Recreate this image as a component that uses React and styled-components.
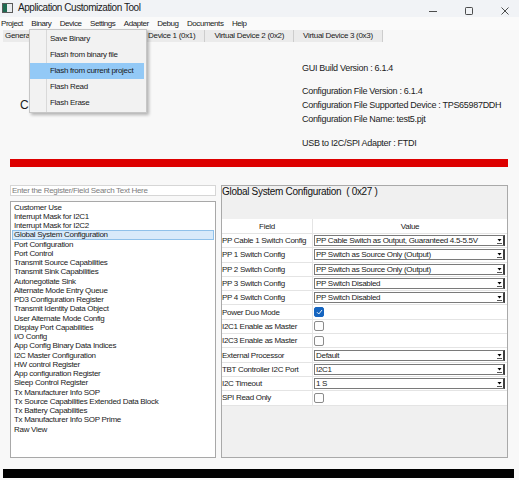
import styled, { createGlobalStyle } from "styled-components";

const GlobalStyle = createGlobalStyle`
  html, body {
    margin: 0;
    padding: 0;
    background: #f8f8f8;
  }
  body {
    font-family: "Liberation Sans", Arial, sans-serif;
  }
`;

const Window = styled.div`
  position: relative;
  width: 519px;
  height: 480px;
  overflow: hidden;
  display: flex;
  flex-direction: column;
  background: #f8f8f8;
  color: #1b1b1b;
  font-family: "Liberation Sans", Arial, sans-serif;
  font-size: 8px;
  letter-spacing: -0.3px;
`;

const TitleBar = styled.div`
  height: 17px;
  display: flex;
  align-items: flex-start;
  background: #f1f3f6;
`;

const AppIcon = styled.svg`
  margin: 3px 0 0 2px;
  flex: none;
`;

const Title = styled.span`
  margin: 2px 0 0 5px;
  font-size: 10px;
  line-height: 11px;
  letter-spacing: -0.45px;
  color: #1a1a1a;
`;

const Controls = styled.div`
  margin-left: auto;
  display: flex;
  gap: 28px;
  padding: 7px 10px 0 0;
`;

const MenuBar = styled.div`
  height: 13px;
  display: flex;
  gap: 8.5px;
  padding-left: 1px;
  background: #fafafa;
`;

const MenuItem = styled.span`
  line-height: 13px;
  letter-spacing: -0.45px;
  color: #1a1a1a;
`;

const TabStrip = styled.div`
  height: 12px;
  display: flex;
  padding-left: 3px;
`;

const Tab = styled.div`
  width: ${(p) => (p.$width ? `${p.$width}px` : "auto")};
  box-sizing: border-box;
  padding: 0 ${(p) => (p.$first ? "2px" : "9px")};
  line-height: 12px;
  white-space: nowrap;
  overflow: hidden;
  background: #ebebeb;
  border-right: 1px solid #cdcdcd;
  color: #1a1a1a;
`;

const Header = styled.div`
  height: 117px;
  display: flex;
`;

const DeviceLabel = styled.div`
  width: 282px;
  padding: 56px 0 0 20px;
  font-size: 12px;
  letter-spacing: 0;
  line-height: 14px;
`;

const Info = styled.div`
  padding-top: 19px;
  font-size: 9px;
  line-height: 14px;
  letter-spacing: -0.3px;
`;

const InfoGroup = styled.div`
  margin-top: ${(p) => p.$gap || 0}px;
`;

const RedBar = styled.div`
  height: 8px;
  margin: 0 11px 0 10px;
  background: #dd0000;
`;

const Workspace = styled.div`
  margin-top: 18px;
  height: 273px;
  display: flex;
  gap: 5px;
  padding: 0 11px 0 10px;
`;

const LeftColumn = styled.div`
  width: 206px;
  display: flex;
  flex-direction: column;
  gap: 5px;
`;

const Search = styled.input`
  height: 11px;
  box-sizing: border-box;
  margin: 0;
  padding: 0 1px;
  border: 1px solid #d6d6d6;
  background: #fff;
  font-family: inherit;
  font-size: 8px;
  letter-spacing: -0.3px;
  outline: none;
  &::placeholder {
    color: #7d7d7d;
  }
`;

const RegisterList = styled.div`
  flex: 1;
  box-sizing: border-box;
  border: 1px solid #a8a8a8;
  background: #fff;
  padding-top: 0.5px;
`;

const RegisterItem = styled.div`
  margin: 0 1px;
  padding-left: 1px;
  line-height: 7.25px;
  border: 1px solid ${(p) => (p.$selected ? "#8fc1ea" : "transparent")};
  background: ${(p) => (p.$selected ? "#d8eafa" : "transparent")};
  white-space: nowrap;
`;

const Panel = styled.div`
  width: 287px;
  box-sizing: border-box;
  border: 1px solid #a9a9a9;
  background: #f0f0f0;
  display: flex;
  flex-direction: column;
`;

const PanelTitle = styled.div`
  height: 33px;
  font-size: 10px;
  line-height: 12px;
  letter-spacing: -0.3px;
  color: #111;
`;

const Grid = styled.div`
  display: grid;
  grid-template-columns: 91px 1fr;
  grid-template-rows: 15px repeat(12, 14.3px);
  background: #fff;
`;

const Cell = styled.div`
  box-sizing: border-box;
  display: flex;
  align-items: center;
  justify-content: ${(p) => (p.$center ? "center" : "flex-start")};
  border-bottom: 1px solid #e4e4e4;
  border-right: ${(p) => (p.$field ? "1px solid #e4e4e4" : "none")};
  white-space: nowrap;
  overflow: hidden;
`;

const Combo = styled.div`
  flex: 1;
  height: 11px;
  box-sizing: border-box;
  margin: 0 2px 0 1px;
  padding-left: 1px;
  display: flex;
  align-items: center;
  background: #fff;
  border: 1px solid #7a7a7a;
  border-right: 2px solid #3f3f3f;
`;

const ComboText = styled.span`
  flex: 1;
  white-space: nowrap;
  overflow: hidden;
`;

const ComboArrow = styled.svg`
  flex: none;
  margin-right: 1px;
`;

const CheckBox = styled.div`
  width: 10px;
  height: 10px;
  box-sizing: border-box;
  margin-left: 1px;
  border-radius: 2px;
  border: 1px solid ${(p) => (p.$checked ? "#1565c0" : "#8b8b8b")};
  background: ${(p) => (p.$checked ? "#1565c0" : "#fdfdfd")};
  display: flex;
  align-items: center;
  justify-content: center;
`;

const BlackBar = styled.div`
  height: 9px;
  margin: 11px 5px 0 3px;
  background: #000;
`;

const Dropdown = styled.div`
  position: absolute;
  left: 29px;
  top: 29px;
  width: 118px;
  height: 84px;
  box-sizing: border-box;
  padding: 1px 2px 1px 0;
  border: 1px solid #c6c6c6;
  background: #f2f2f2
    linear-gradient(
      to right,
      transparent 16px,
      #d9d9d9 16px,
      #d9d9d9 17px,
      transparent 17px
    );
  box-shadow: 2px 2px 3px rgba(0, 0, 0, 0.28);
`;

const DropdownItem = styled.div`
  height: 16px;
  line-height: 16px;
  padding-left: 20px;
  background: ${(p) => (p.$active ? "#93c9f6" : "transparent")};
  color: #1a1a1a;
`;

const menus = ["Project", "Binary", "Device", "Settings", "Adapter", "Debug", "Documents", "Help"];

const binaryMenu = [
  "Save Binary",
  "Flash from binary file",
  "Flash from current project",
  "Flash Read",
  "Flash Erase",
];

const registers = [
  "Customer Use",
  "Interrupt Mask for I2C1",
  "Interrupt Mask for I2C2",
  "Global System Configuration",
  "Port Configuration",
  "Port Control",
  "Transmit Source Capabilities",
  "Transmit Sink Capabilities",
  "Autonegotiate Sink",
  "Alternate Mode Entry Queue",
  "PD3 Configuration Register",
  "Transmit Identity Data Object",
  "User Alternate Mode Config",
  "Display Port Capabilities",
  "I/O Config",
  "App Config Binary Data Indices",
  "I2C Master Configuration",
  "HW control Register",
  "App configuration Register",
  "Sleep Control Register",
  "Tx Manufacturer Info SOP",
  "Tx Source Capabilities Extended Data Block",
  "Tx Battery Capabilities",
  "Tx Manufacturer Info SOP Prime",
  "Raw View",
];

const fields = [
  { name: "PP Cable 1 Switch Config", combo: "PP Cable Switch as Output, Guaranteed 4.5-5.5V" },
  { name: "PP 1 Switch Config", combo: "PP Switch as Source Only (Output)" },
  { name: "PP 2 Switch Config", combo: "PP Switch as Source Only (Output)" },
  { name: "PP 3 Switch Config", combo: "PP Switch Disabled" },
  { name: "PP 4 Switch Config", combo: "PP Switch Disabled" },
  { name: "Power Duo Mode", check: true },
  { name: "I2C1 Enable as Master", check: false },
  { name: "I2C3 Enable as Master", check: false },
  { name: "External Processor", combo: "Default" },
  { name: "TBT Controller I2C Port", combo: "I2C1" },
  { name: "I2C Timeout", combo: "1 S" },
  { name: "SPI Read Only", check: false },
];

const ValueCell = ({ field }) => {
  if (field.combo) {
    return (
      <Combo>
        <ComboText>{field.combo}</ComboText>
        <ComboArrow width="5" height="7" viewBox="0 0 5 7">
          <polygon points="0.5,2 4.5,2 2.5,4.5" fill="#000" />
          <line x1="0" y1="6.5" x2="5" y2="6.5" stroke="#555" strokeWidth="1" />
        </ComboArrow>
      </Combo>
    );
  }
  return (
    <CheckBox $checked={field.check}>
      {field.check && (
        <svg width="7" height="6" viewBox="0 0 7 6">
          <path d="M1 3.2 L2.8 5 L6 1" fill="none" stroke="#fff" strokeWidth="0.9" />
        </svg>
      )}
    </CheckBox>
  );
};

const App = () => {
  return (
    <Window>
      <GlobalStyle />
      <TitleBar>
        <AppIcon width="11" height="10" viewBox="0 0 11 10">
          <rect x="0.5" y="0.5" width="10" height="9" fill="#e9ecef" stroke="#5a5a5a" />
          <rect x="1" y="1" width="4" height="8" fill="#1f6b52" />
        </AppIcon>
        <Title>Application Customization Tool</Title>
        <Controls>
          <svg width="8" height="8" viewBox="0 0 8 8">
            <line x1="0" y1="4.5" x2="8" y2="4.5" stroke="#222" strokeWidth="0.8" />
          </svg>
          <svg width="8" height="8" viewBox="0 0 8 8">
            <rect x="0.5" y="0.5" width="7" height="7" rx="0.8" fill="none" stroke="#222" strokeWidth="0.8" />
          </svg>
          <svg width="8" height="8" viewBox="0 0 8 8">
            <path d="M0.5 0.5 L7.5 7.5 M7.5 0.5 L0.5 7.5" stroke="#222" strokeWidth="0.8" />
          </svg>
        </Controls>
      </TitleBar>

      <MenuBar>
        {menus.map((m) => (
          <MenuItem key={m}>{m}</MenuItem>
        ))}
      </MenuBar>

      <TabStrip>
        <Tab $first $width={136}>General</Tab>
        <Tab>Device 1 (0x1)</Tab>
        <Tab>Virtual Device 2 (0x2)</Tab>
        <Tab>Virtual Device 3 (0x3)</Tab>
      </TabStrip>

      <Header>
        <DeviceLabel>C</DeviceLabel>
        <Info>
          <div>GUI Build Version : 6.1.4</div>
          <InfoGroup $gap={9}>
            <div>Configuration File Version : 6.1.4</div>
            <div>Configuration File Supported Device : TPS65987DDH</div>
            <div>Configuration File Name: test5.pjt</div>
          </InfoGroup>
          <InfoGroup $gap={10}>USB to I2C/SPI Adapter : FTDI</InfoGroup>
        </Info>
      </Header>

      <RedBar />

      <Workspace>
        <LeftColumn>
          <Search placeholder="Enter the Register/Field Search Text Here" />
          <RegisterList>
            {registers.map((r) => (
              <RegisterItem key={r} $selected={r === "Global System Configuration"}>
                {r}
              </RegisterItem>
            ))}
          </RegisterList>
        </LeftColumn>

        <Panel>
          <PanelTitle>Global System Configuration&nbsp;&nbsp;( 0x27 )</PanelTitle>
          <Grid>
            <Cell $field $center>Field</Cell>
            <Cell $center>Value</Cell>
            {fields.map((f) => [
              <Cell $field key={f.name}>{f.name}</Cell>,
              <Cell key={f.name + "-v"}>
                <ValueCell field={f} />
              </Cell>,
            ])}
          </Grid>
        </Panel>
      </Workspace>

      <BlackBar />

      <Dropdown>
        {binaryMenu.map((item) => (
          <DropdownItem key={item} $active={item === "Flash from current project"}>
            {item}
          </DropdownItem>
        ))}
      </Dropdown>
    </Window>
  );
};

export default App;
